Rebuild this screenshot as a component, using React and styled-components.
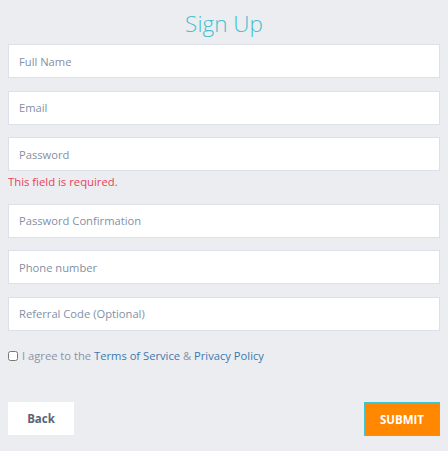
import React from "react";
import styled, { createGlobalStyle } from "styled-components";

const GlobalStyle = createGlobalStyle`
  html, body {
    margin: 0;
    padding: 0;
    background: #ecedf1;
  }
  body {
    font-family: "Open Sans", "Noto Sans", sans-serif;
  }
`;

const Page = styled.div`
  width: 448px;
  height: 451px;
  box-sizing: border-box;
  padding: 8px 8px 0;
  display: flex;
  flex-direction: column;
`;

const Title = styled.h1`
  margin: 0 0 4px;
  height: 32px;
  line-height: 32px;
  text-align: center;
  font-size: 22.5px;
  font-weight: 300;
  color: #45c0d0;
`;

const Field = styled.div`
  display: flex;
  flex-direction: column;
  margin-bottom: 12.5px;
`;

const Input = styled.input`
  box-sizing: border-box;
  height: 34px;
  width: 100%;
  padding: 0 10px;
  border: 1px solid #dde0e8;
  background: #fff;
  font-family: inherit;
  font-size: 11.2px;
  color: #5a6478;
  outline: none;

  &::placeholder {
    color: #8390a6;
  }
`;

const Error = styled.div`
  margin-top: 1px;
  height: 19px;
  font-size: 11.3px;
  line-height: 19px;
  color: #e8415a;
`;

const Agree = styled.label`
  display: flex;
  align-items: center;
  gap: 4px;
  margin-top: 5px;
  font-size: 11.2px;
  color: #8a93a8;
`;

const Check = styled.input`
  margin: 0;
  width: 10px;
  height: 10px;
`;

const Link = styled.a`
  color: #3a78b0;
  text-decoration: none;
`;

const Actions = styled.div`
  display: flex;
  justify-content: space-between;
  margin-top: 39px;
`;

const Button = styled.button`
  box-sizing: border-box;
  height: ${(p) => (p.$primary ? "34px" : "33px")};
  width: ${(p) => (p.$primary ? "76px" : "66px")};
  border: ${(p) => (p.$primary ? "1px solid #3dc5d3" : "none")};
  background: ${(p) => (p.$primary ? "#ff8800" : "#fff")};
  color: ${(p) => (p.$primary ? "#fff" : "#5a6478")};
  font-family: inherit;
  font-size: 11.5px;
  font-weight: 700;
  text-transform: ${(p) => (p.$primary ? "uppercase" : "none")};
  cursor: pointer;
`;

const fields = [
  { placeholder: "Full Name" },
  { placeholder: "Email", type: "email" },
  { placeholder: "Password", type: "password", error: "This field is required." },
  { placeholder: "Password Confirmation", type: "password" },
  { placeholder: "Phone number" },
  { placeholder: "Referral Code (Optional)" },
];

const App = () => {
  return (
    <Page>
      <GlobalStyle />
      <Title>Sign Up</Title>
      {fields.map((f) => (
        <Field key={f.placeholder}>
          <Input type={f.type || "text"} placeholder={f.placeholder} />
          {f.error && <Error>{f.error}</Error>}
        </Field>
      ))}
      <Agree>
        <Check type="checkbox" />
        <span>
          I agree to the <Link href="#">Terms of Service</Link> &amp;{" "}
          <Link href="#">Privacy Policy</Link>
        </span>
      </Agree>
      <Actions>
        <Button>Back</Button>
        <Button $primary>Submit</Button>
      </Actions>
    </Page>
  );
};

export default App;
